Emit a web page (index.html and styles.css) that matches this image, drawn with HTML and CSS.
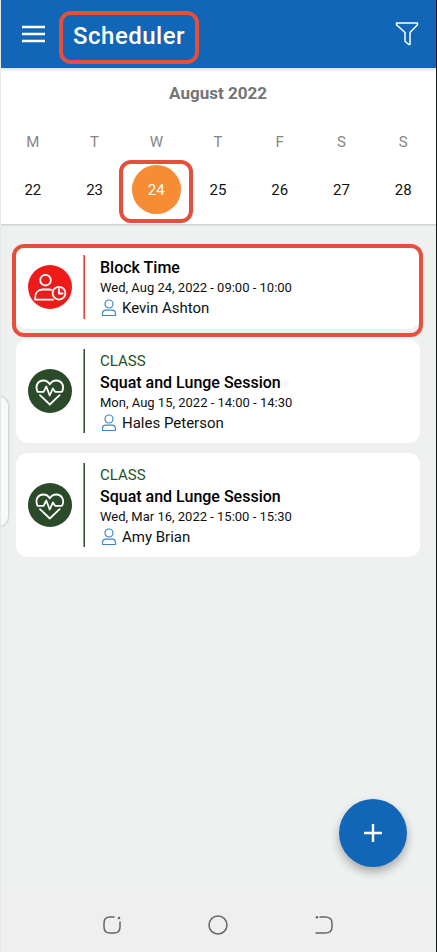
FILE: index.html
```html
<!DOCTYPE html>
<html lang="en">
<head>
<meta charset="utf-8">
<meta name="viewport" content="width=device-width, initial-scale=1">
<title>Scheduler</title>
<link rel="stylesheet" href="styles.css">
</head>
<body>
<svg class="sprite" aria-hidden="true">
  <symbol id="person" viewBox="0 0 16 18"><circle cx="8" cy="5" r="4"/><path d="M1.500 16.500v-1.800c0-2.200 1.400-3.600 3.500-3.600h6c2.100 0 3.500 1.400 3.500 3.600v1.800z"/></symbol>
  <symbol id="heart" viewBox="0 0 44 44"><path d="M9.200 22C7 16.500 10 11.500 15.200 11.500c3.200 0 5.300 1.600 6.600 3.900 1.300-2.300 3.400-3.900 6.600-3.900 5.200 0 8.200 5 6 10.500l-.5.800h-6.800l-2.200-3.300-3.200 7-3.400-9-2.700 5.300H9.600zM12 26.200l9.800 9.300 9.800-9.300"/></symbol>
</svg>
<header class="topbar">
  <button class="icon-button" aria-label="Open menu">
    <svg class="menu-icon" viewBox="0 0 24 18"><path d="M0 2h23M0 9h23M0 16h23"/></svg>
  </button>
  <h1 class="title">Scheduler</h1>
  <button class="icon-button" aria-label="Filter">
    <svg class="filter-icon" viewBox="0 0 24 24"><path d="M1.500 1h21v1.800L15 10.500v12l-1.600-.2-3.400-3v-8.800L1.500 2.800z"/></svg>
  </button>
</header>
<section class="calendar" aria-label="Week">
  <h2 class="month">August 2022</h2>
  <div class="week">
    <span class="weekday">M</span><span class="weekday">T</span><span class="weekday">W</span><span class="weekday">T</span><span class="weekday">F</span><span class="weekday">S</span><span class="weekday">S</span>
    <button class="day">22</button><button class="day">23</button><button class="day selected">24</button><button class="day">25</button><button class="day">26</button><button class="day">27</button><button class="day">28</button>
  </div>
</section>
<main class="events">
  <article class="card blocked marked">
    <svg class="badge" viewBox="0 0 44 44"><circle class="disc" cx="22" cy="22" r="22"/><circle cx="17.500" cy="15.200" r="5.300"/><path d="M25 34.700H7.200v-2c0-4.800 2.900-8.200 7.300-8.200h6.500c1 0 1.900.1 2.700.5"/><circle cx="31" cy="28.200" r="6.400"/><path d="M31 24v4.500h3.600"/></svg>
    <div class="details">
      <h3 class="name">Block Time</h3>
      <p class="date">Wed, Aug 24, 2022 - 09:00 - 10:00</p>
      <p class="person"><svg class="person-icon"><use href="#person"/></svg>Kevin Ashton</p>
    </div>
  </article>
  <article class="card">
    <svg class="badge" viewBox="0 0 44 44"><circle class="disc" cx="22" cy="22" r="22"/><use href="#heart"/></svg>
    <div class="details">
      <p class="kind">CLASS</p>
      <h3 class="name">Squat and Lunge Session</h3>
      <p class="date">Mon, Aug 15, 2022 - 14:00 - 14:30</p>
      <p class="person"><svg class="person-icon"><use href="#person"/></svg>Hales Peterson</p>
    </div>
  </article>
  <article class="card">
    <svg class="badge" viewBox="0 0 44 44"><circle class="disc" cx="22" cy="22" r="22"/><use href="#heart"/></svg>
    <div class="details">
      <p class="kind">CLASS</p>
      <h3 class="name">Squat and Lunge Session</h3>
      <p class="date">Wed, Mar 16, 2022 - 15:00 - 15:30</p>
      <p class="person"><svg class="person-icon"><use href="#person"/></svg>Amy Brian</p>
    </div>
  </article>
</main>
<div class="edge-handle"></div>
<button class="add" aria-label="Add event"><svg class="plus" viewBox="0 0 18 18"><path d="M9 0v18M0 9h18"/></svg></button>
<nav class="system-nav" aria-label="System">
  <button class="nav-button" aria-label="Recent apps"><svg class="nav-icon" viewBox="0 0 20 20"><path d="M12 2H8Q2 2 2 8v4q0 6 6 6h4q6 0 6-6V7"/><circle class="dot" cx="17" cy="3" r="1.300"/></svg></button>
  <button class="nav-button" aria-label="Home"><svg class="nav-icon" viewBox="0 0 20 20"><circle cx="10" cy="10" r="9"/></svg></button>
  <button class="nav-button" aria-label="Back"><svg class="nav-icon" viewBox="0 0 20 20"><path d="M6 2h5q7 0 7 6v4q0 6-7 6H2"/><circle class="dot" cx="3" cy="2.200" r="1.300"/></svg></button>
</nav>
</body>
</html>
```
FILE: styles.css
```css
* { box-sizing: border-box; }
body {
  margin: 0;
  min-height: 100vh;
  display: flex;
  flex-direction: column;
  position: relative;
  background: #eff1f1;
  border-left: 1px solid #e6e8e8;
  border-right: 1px solid #15181c;
  font-family: Roboto, "Liberation Sans", sans-serif;
  color: #111;
}
h1, h2, h3, p { margin: 0; font-weight: 500; }
button { border: 0; padding: 0; background: none; font: inherit; color: inherit; }
svg { display: block; fill: none; stroke-linecap: round; stroke-linejoin: round; }
.sprite { position: absolute; width: 0; height: 0; }

.topbar {
  height: 68px;
  margin-left: -1px;
  padding: 0 17px 0 22px;
  display: flex;
  align-items: center;
  background: #1266b8;
  box-shadow: 0 1px 4px rgba(0, 0, 0, .2);
  z-index: 1;
}
.menu-icon { width: 24px; height: 18px; stroke: #fff; stroke-width: 2.4; stroke-linecap: butt; }
.filter-icon { width: 24px; height: 24px; stroke: #fff; stroke-width: 1.5; }
.title {
  position: relative;
  margin: 4px auto 0 27px;
  font-size: 24px;
  line-height: 32px;
  letter-spacing: 0.5px;
  color: #fff;
}
.title::after, .selected::after, .marked::after {
  content: "";
  position: absolute;
  border: 4px solid #e5503c;
  border-radius: 12px;
  pointer-events: none;
}
.title::after { inset: -9px -14px -12px; }

.calendar {
  padding: 15px 2px 10px 1px;
  background: #fff;
  box-shadow: 0 1px 2px rgba(0, 0, 0, .2);
}
.month { font-size: 17px; font-weight: 700; line-height: 20px; text-align: center; color: #757575; }
.week {
  display: grid;
  grid-template-columns: repeat(7, 1fr);
  justify-items: center;
  row-gap: 13px;
  padding-top: 29px;
}
.weekday { font-size: 15px; line-height: 20px; color: #868686; }
.day { width: 49px; height: 49px; border-radius: 50%; font-size: 15px; }
.selected { position: relative; background: #f68c34; color: #fff; }
.selected::after { inset: -5px -12px -9px -13px; }

.events {
  flex: 1;
  display: flex;
  flex-direction: column;
  gap: 10px;
  padding: 21px 16px 20px 15px;
}
.card {
  position: relative;
  display: flex;
  align-items: center;
  gap: 12px;
  padding: 10px 12px;
  border-radius: 12px;
  background: #fff;
}
.marked::after { inset: -1px -3px -8px -4px; }
.badge { width: 44px; height: 44px; flex: none; stroke: #fff; stroke-width: 1.8; }
.disc { fill: #2a4a2a; stroke: none; }
.blocked .disc { fill: #ef1b1b; }
.details {
  min-height: 64px;
  padding: 2px 0 0 15px;
  border-left: 1px solid #2a4a2a;
  box-shadow: -1px 0 #8fa08f;
}
.blocked .details { border-color: #ef3b3b; box-shadow: -1px 0 #f58a8a; }
.kind, .name { line-height: 21px; }
.date, .person { line-height: 20px; }
.kind { font-size: 15px; font-weight: 400; color: #275127; }
.name { font-size: 16px; color: #000; }
.date { font-size: 13px; font-weight: 400; }
.person { display: flex; align-items: center; gap: 5px; font-size: 15px; font-weight: 400; padding-left: 1px; }
.person-icon { width: 16px; height: 18px; stroke: #3c86d0; stroke-width: 1.2; }

.edge-handle {
  position: absolute;
  left: -2px;
  top: 397px;
  width: 9px;
  height: 129px;
  border-radius: 0 9px 9px 0;
  background: #f8f9f9;
  box-shadow: 0 0 3px rgba(0, 0, 0, .3);
}
.add {
  position: fixed;
  right: 30px;
  bottom: 85px;
  width: 68px;
  height: 68px;
  display: grid;
  place-items: center;
  border-radius: 50%;
  background: #1266b8;
  box-shadow: 0 5px 10px rgba(0, 0, 0, .3);
}
.plus { width: 18px; height: 18px; stroke: #fff; stroke-width: 2.4; stroke-linecap: butt; }
.system-nav {
  display: flex;
  justify-content: center;
  gap: 86px;
  padding: 20px 2px 17px 0;
  background: #efefef;
}
.nav-icon { width: 20px; height: 20px; stroke: #666; stroke-width: 1.5; }
.dot { fill: #666; stroke: none; }
```
